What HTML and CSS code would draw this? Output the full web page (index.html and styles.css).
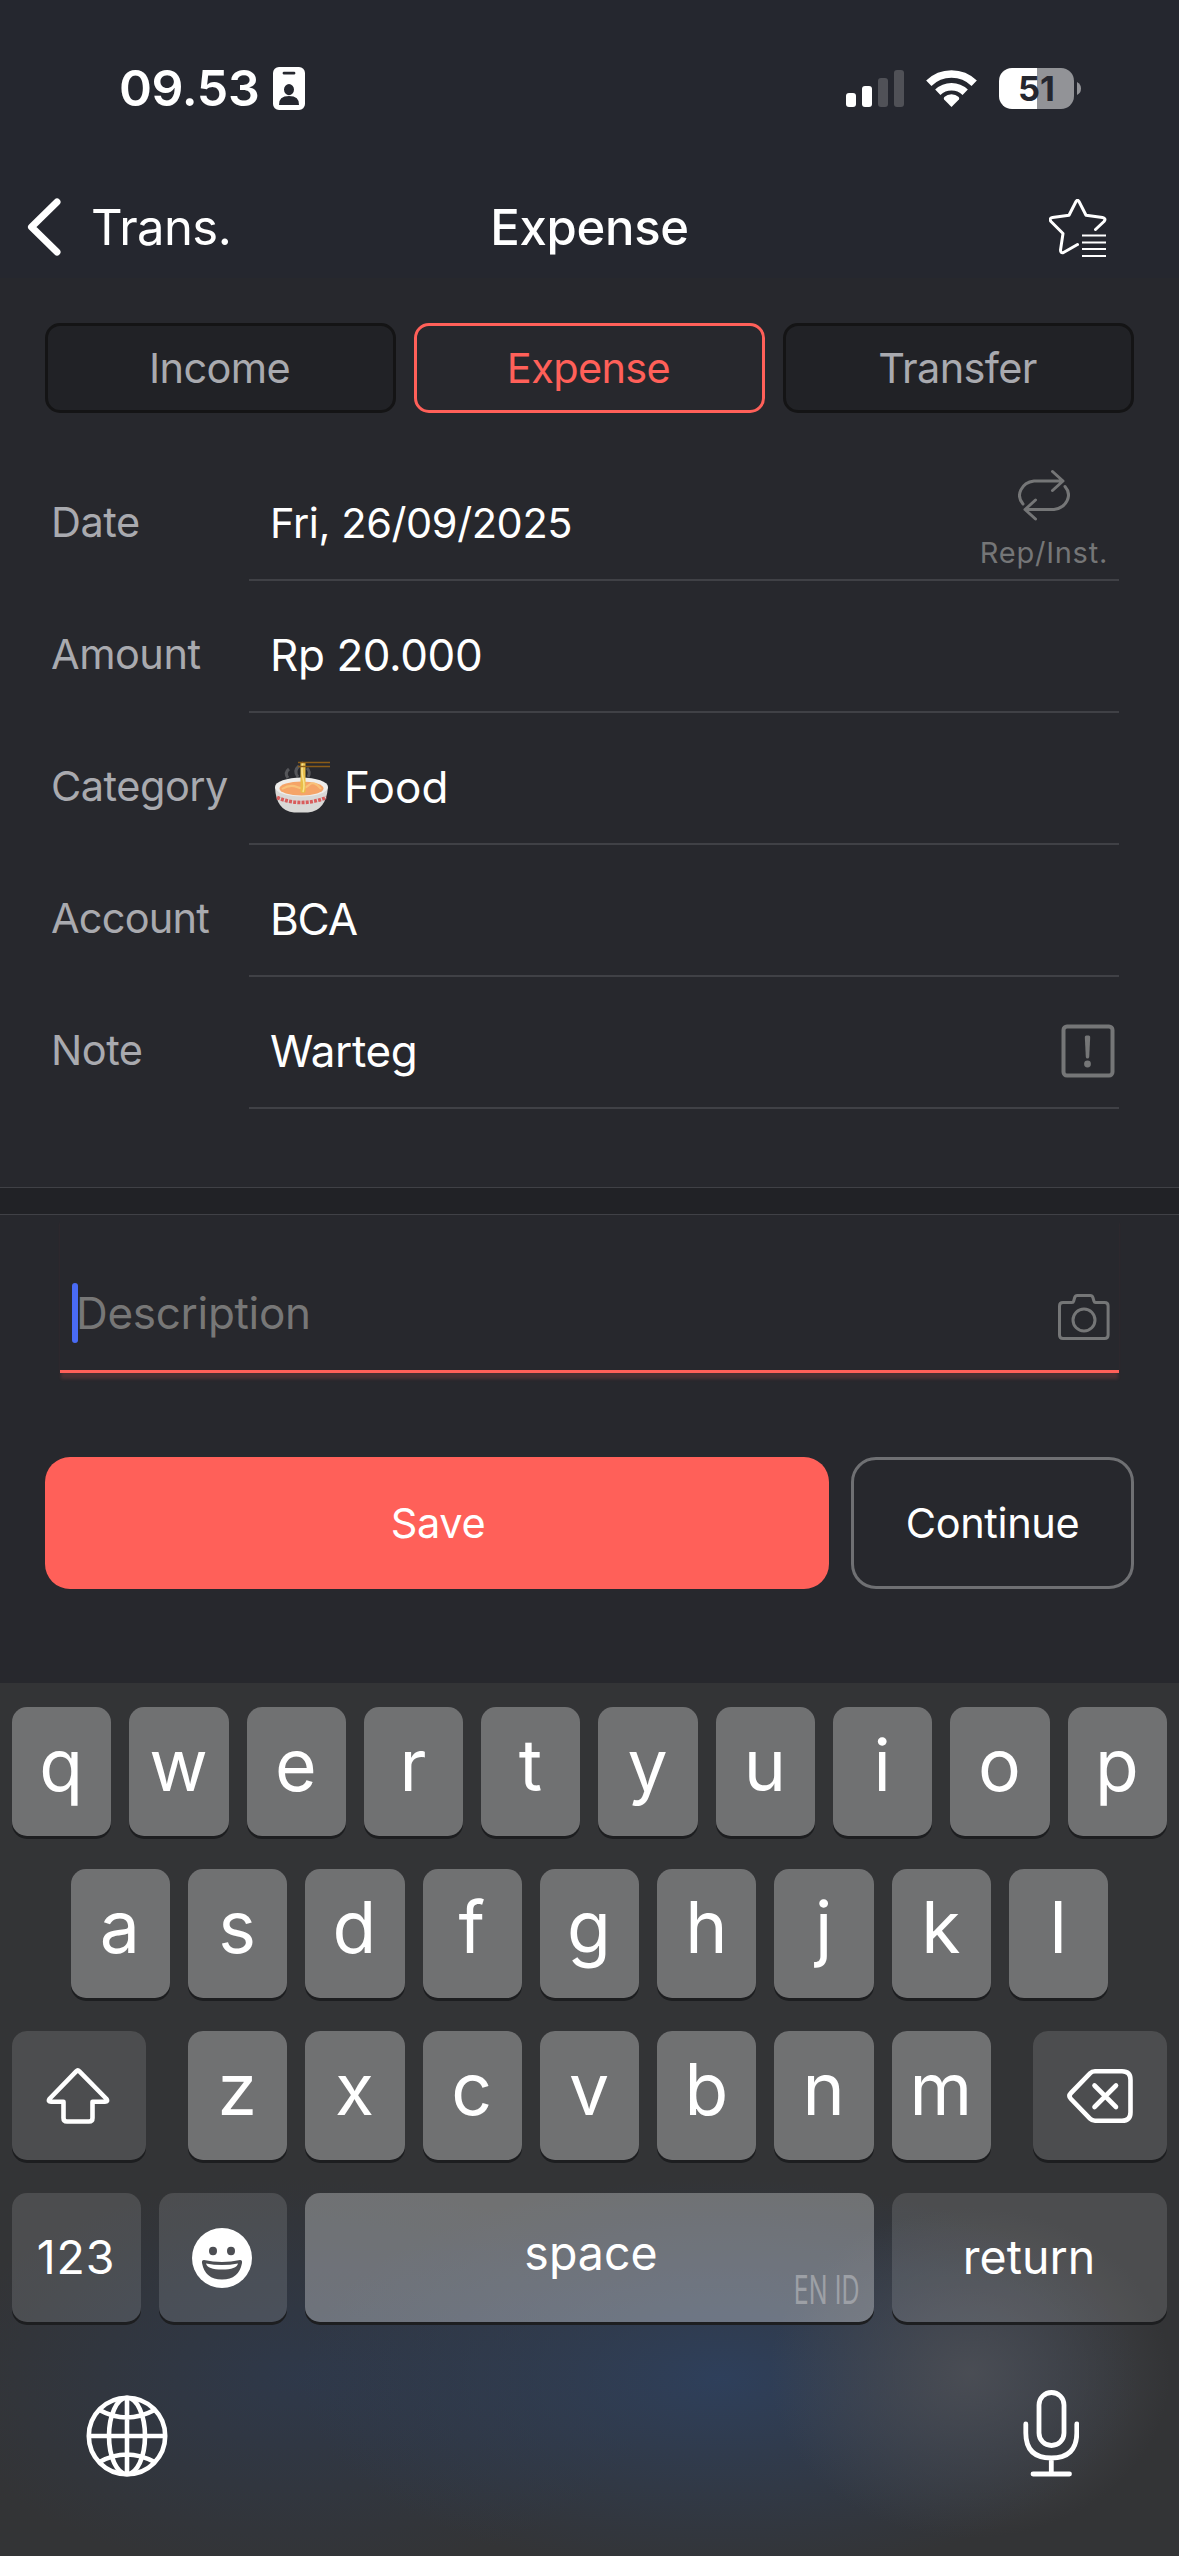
FILE: index.html
```html
<!DOCTYPE html>
<html lang="en">
<head>
<meta charset="utf-8">
<title>Expense</title>
<link rel="stylesheet" href="styles.css">
</head>
<body>
<div class="screen">
  <header class="top">
    <div class="status">
      <span class="time">09.53</span>
      <svg class="badge" width="32" height="43" viewBox="0 0 32 43"><path fill="#fff" fill-rule="evenodd" d="M6 0h20a6 6 0 0 1 6 6v31a6 6 0 0 1-6 6H6a6 6 0 0 1-6-6V6a6 6 0 0 1 6-6zM11 4.8a1.4 1.4 0 0 0 0 2.8h10a1.4 1.4 0 0 0 0-2.8zM16 17a5 5.6 0 1 0 0 11.2A5 5.6 0 1 0 16 17zM6 38h20q.5-9-10-9T6 38z"/></svg>
      <div class="indicators">
        <svg width="58" height="37" viewBox="0 0 58 37"><g fill="#fff"><rect y="23" width="10" height="14" rx="3"/><rect x="16" y="16" width="10" height="21" rx="3"/><g fill="#505157"><rect x="32" y="8" width="10" height="29" rx="3"/><rect x="48" width="10" height="37" rx="3"/></g></g></svg>
        <svg class="wifi" width="51" height="37" viewBox="0 0 51 37"><g fill="none" stroke="#fff" stroke-width="7.6"><path d="M2.8 13.2a32.5 32.5 0 0 1 45.4 0"/><path d="M11.8 22.3a19.8 19.8 0 0 1 27.4 0"/></g><path fill="#fff" d="M25.5 37l-7.4-7.6a2 2 0 0 1 .2-2.4 10.6 10.6 0 0 1 14.4 0 2 2 0 0 1 .2 2.4z"/></svg>
        <div class="battery"><span>51</span></div>
        <svg width="4" height="13" viewBox="0 0 4 13"><path fill="#929397" d="M0 0q4 2 4 6.500T0 13z"/></svg>
      </div>
    </div>
    <nav class="nav">
      <div class="back">
        <svg width="34" height="58" viewBox="0 0 34 58"><path d="M30 4L4.500 29 30 54" fill="none" stroke="#fff" stroke-width="7" stroke-linecap="round" stroke-linejoin="round"/></svg>
        <span>Trans.</span>
      </div>
      <h1 class="title">Expense</h1>
      <svg class="star" width="58" height="59" viewBox="0 0 58 59"><g fill="none" stroke="#fff" stroke-width="3" stroke-linecap="round" stroke-linejoin="round"><path d="M46.500 30.500L55 22.500q2.500-3-1.500-4L37 16.200 30 2.500q-1.500-2.500-3 0L20 16.200 3.500 18.500q-4 1-1.500 4L14 34.500 11.500 51q0 3.500 3 2.500L28.500 45.500"/></g><path stroke="#fff" stroke-width="2" d="M33 36.500h24M33 43.500h24M33 50h24M33 57h24"/></svg>
    </nav>
  </header>

  <div class="tabs">
    <div class="tab">Income</div>
    <div class="tab tab-active"><span>Expense</span></div>
    <div class="tab">Transfer</div>
  </div>

  <section class="form">
    <div class="row"><div class="label">Date</div>
      <div class="field"><span class="value date">Fri, 26/09/2025</span>
        <div class="repeat">
          <svg width="52" height="52" viewBox="0 0 52 52"><path d="M5 35A17 14.500 0 0 1 16 12h28M34.500 2.500L45 12 34.500 21.500M47 17.500A17 14.500 0 0 1 36 40.500H8M17.500 31L7 40.500 17.500 50" fill="none" stroke="#757677" stroke-width="3" stroke-linecap="round" stroke-linejoin="round"/></svg>
          <span>Rep/Inst.</span>
        </div>
      </div></div>
    <div class="row"><div class="label">Amount</div><div class="field"><span class="value amount">Rp 20.000</span></div></div>
    <div class="row"><div class="label">Category</div>
      <div class="field">
        <svg class="bowl" width="56" height="54" viewBox="0 0 56 54">
          <path d="M14 18q-4-5 1-9M24 17q-5-6 1-11M34 17q3-5-1-9" fill="none" stroke="#55565a" stroke-width="3"/>
          <path d="M1 27Q2 51 20 52.500h14Q52 51 54 27z" fill="#d9d8d6"/>
          <ellipse cx="27.500" cy="27" rx="26.500" ry="9.500" fill="#eeedeb"/>
          <ellipse cx="27.500" cy="28.500" rx="22" ry="7" fill="#f5a468"/>
          <path d="M8 29q8-5 15-2t12-2 12 4" fill="none" stroke="#f8c27a" stroke-width="2"/>
          <path d="M3 37.500q24 10 49.500 0" fill="none" stroke="#d95c5c" stroke-width="3.600" stroke-dasharray="3 1.200"/>
          <path d="M26.500 2h5v30q-2.500 2-5 0z" fill="#e9bf49"/><path d="M29 2q-2 8 0 16t0 14" fill="none" stroke="#f9e391" stroke-width="1.500"/>
          <path d="M24 2.500h32M24 6.500h32" stroke="#8a5b17" stroke-width="1.600"/>
        </svg>
        <span class="value food">Food</span></div></div>
    <div class="row"><div class="label account">Account</div><div class="field"><span class="value bca">BCA</span></div></div>
    <div class="row"><div class="label">Note</div><div class="field"><span class="value warteg">Warteg</span>
      <svg class="alert" width="54" height="54" viewBox="0 0 54 54"><rect x="2.500" y="2.500" width="49" height="49" rx="3.500" fill="none" stroke="#757677" stroke-width="4"/><path fill="#757677" d="M23.800 13q0-1.500 1.500-1.500h2.400q1.500 0 1.500 1.500l-1 20q-.2 1.600-1.700 1.600T24.800 33z"/><circle cx="26.500" cy="40" r="3.400" fill="#757677"/></svg></div></div>
  </section>

  <div class="band"></div>

  <div class="description">
    <i class="caret"></i><span>Description</span>
    <svg class="camera" width="52" height="46" viewBox="0 0 52 46"><g fill="none" stroke="#757677" stroke-width="3" stroke-linejoin="round"><path d="M5 8.500h9q1.300 0 1.700-1.500l1-3.500q.6-2 2.600-2h13q2 0 2.600 2l1 3.500q.4 1.500 1.700 1.500h9q3.500 0 3.500 3.500v29q0 3.500-3.500 3.500H5q-3.500 0-3.500-3.500V12Q1.500 8.500 5 8.500z"/><circle cx="26" cy="26" r="11"/></g></svg>
  </div>

  <div class="actions"><div class="save">Save</div><div class="continue">Continue</div></div>

  <div class="keyboard">
    <div class="keys"><b>q</b><b>w</b><b>e</b><b>r</b><b>t</b><b>y</b><b>u</b><b>i</b><b>o</b><b>p</b></div>
    <div class="keys keys-inset"><b>a</b><b>s</b><b>d</b><b>f</b><b>g</b><b>h</b><b>j</b><b>k</b><b>l</b></div>
    <div class="keys">
      <b class="dark side shift"><svg width="64" height="56" viewBox="0 0 64 56"><path d="M30.200 3.300q1.600-1.600 3.200 0L60.600 31q1.500 2.700-1.600 2.700H46.500V50q0 3.500-3.500 3.500H21q-3.500 0-3.500-3.500V33.700H5q-3.100 0-1.600-2.700z" fill="none" stroke="#fff" stroke-width="4.600" stroke-linejoin="round"/></svg></b>
      <b>z</b><b>x</b><b>c</b><b>v</b><b>b</b><b>n</b><b>m</b>
      <b class="dark side delete"><svg width="66" height="54" viewBox="0 0 66 54"><g fill="none" stroke="#fff" stroke-width="4.600" stroke-linejoin="round" stroke-linecap="round"><path d="M28 2.300h27q8.500 0 8.500 8.500v32.400q0 8.500-8.500 8.500H28q-3 0-5-2L4 30q-3-3 0-6L23 4.300q2-2 5-2z"/><path d="M27.500 16.500l21.500 21.500M49 16.500L27.500 38"/></g></svg></b>
    </div>
    <div class="keys">
      <b class="dark num word">123</b>
      <b class="dark emoji"><svg width="60" height="60" viewBox="0 0 60 60"><circle cx="30" cy="30" r="30" fill="#fff"/><g fill="#4c4e53"><ellipse cx="21" cy="23" rx="4" ry="4.200"/><ellipse cx="39" cy="23" rx="4" ry="4.200"/><path d="M12 32q18 4 36 0 2.500 0 2 3-3 16.500-20 16.500T10 35q-.5-3 2-3z"/></g><path fill="#fff" d="M14 35.500q16 3 32 0-1.500 6-16 6t-16-6z"/></svg></b>
      <b class="space word"><span>space</span><small>EN ID</small></b>
      <b class="dark return word">return</b>
    </div>
    <div class="tools">
      <svg width="82" height="82" viewBox="0 0 82 82"><g fill="none" stroke="#fff" stroke-width="4.600"><circle cx="41" cy="41" r="38.200"/><ellipse cx="41" cy="41" rx="18" ry="38.200"/><path d="M41 3v76M3 41h76M13.500 15q27 15 55 0M13.500 67q27-15 55 0"/></g></svg>
      <svg class="mic" width="56" height="87" viewBox="0 0 56 87"><g fill="none" stroke="#fff" stroke-width="4.800" stroke-linecap="round"><rect x="16" y="2.500" width="25" height="53" rx="12.500"/><path d="M2.800 34v9q0 25 25.500 25t25.500-25v-9M28.300 68v16M10 84h36.500"/></g></svg>
    </div>
  </div>
</div>
</body>
</html>
```
FILE: styles.css
```css
* { box-sizing: border-box; }
body { margin: 0; background: #27282d; }
svg { display: block; flex: none; }
.screen { width: 1179px; height: 2556px; overflow: hidden; display: flex; flex-direction: column; background: #27282d; color: #fff; font-family: Inter, "Liberation Sans", sans-serif; font-size: 41.5px; }
.top { height: 278px; flex: none; background: #25272f; }
.status { height: 176px; display: flex; align-items: center; padding: 0 98px 0 119px; }
.time { font-size: 50px; font-weight: 570; width: 154px; letter-spacing: -.4px; }
.indicators { display: flex; align-items: center; margin-left: auto; }
.wifi { margin: 0 22px; }
.battery { width: 75px; height: 41px; margin-right: 3px; border-radius: 13px; background: linear-gradient(90deg, #fff 38px, #929397 38px); color: #25272f; font-size: 34.5px; font-weight: 650; line-height: 41px; text-align: center; }
.nav { height: 102px; display: grid; grid-template-columns: 1fr 220px 1fr; align-items: center; padding: 0 27px; font-size: 49px; }
.back { display: flex; align-items: center; gap: 30px; letter-spacing: -.6px; }
.title { margin: 0; font-size: 49px; font-weight: 550; text-align: center; letter-spacing: -.3px; }
.star { justify-self: end; margin: 3px 45px 0 0; }
.tabs { display: grid; grid-template-columns: repeat(3, 1fr); gap: 18px; padding: 45px 45px 0; letter-spacing: -.65px; }
.tab { height: 90px; padding-right: 2px; border: 3px solid #141415; border-radius: 15px; background: #212226; color: #a9aaaf; line-height: 84px; text-align: center; }
.tab-active { border-color: #ff6059; background: none; color: #ff6059; }
.form { padding: 36px 60px 0 51px; }
.row { height: 132px; display: grid; grid-template: 132px / 198px 1fr; }
.label { color: #a9aaaf; line-height: 146px; letter-spacing: -.5px; }
.account { letter-spacing: -.8px; }
.field { border-bottom: 2px solid #404146; padding-left: 21px; display: flex; align-items: center; padding-top: 17px; }
.value { font-size: 44px; letter-spacing: -.4px; }
.date { font-size: 41.5px; }
.food { letter-spacing: .2px; }
.bca { letter-spacing: -1.2px; }
.repeat { align-self: flex-start; margin: 3px 11px 0 auto; display: flex; flex-direction: column; align-items: center; gap: 17px; color: #757677; font-size: 29px; line-height: 30px; letter-spacing: .75px; }
.bowl { margin: 0 14px 0 4px; }
.alert { margin-left: auto; margin-right: 4px; }
.band { height: 28px; flex: none; margin-top: 78px; background: #212226; border: solid #404146; border-width: 1px 0; }
.description { height: 158px; flex: none; margin: 0 60px; padding: 41px 9px 0 12px; border-bottom: 3px solid #ff6059; box-shadow: 0 7px 3px -1px rgba(255, 96, 89, .16); display: flex; align-items: center; font-size: 44px; color: #777; letter-spacing: -.3px; }
.description span { margin-left: -2px; }
.caret { width: 6px; height: 60px; border-radius: 3px; background: #496bf5; }
.camera { margin: 7px 0 0 auto; }
.actions { display: flex; gap: 22px; padding: 84px 45px 0; text-align: center; line-height: 132px; letter-spacing: -.4px; }
.save { flex: 1; height: 132px; padding-left: 2px; border-radius: 25px; background: #ff6059; }
.continue { width: 283px; height: 132px; border: 3px solid #6f7073; border-radius: 25px; line-height: 126px; }
.keyboard { height: 873px; flex: none; margin-top: 94px; padding: 24px 12px 0; display: flex; flex-direction: column; gap: 33px; background: radial-gradient(ellipse 200px 165px at 970px 690px, rgba(75, 78, 85, .95), rgba(75, 78, 85, 0)), radial-gradient(ellipse 420px 200px at 720px 695px, rgba(46, 64, 93, .95), rgba(46, 64, 93, 0)), radial-gradient(ellipse 360px 200px at 300px 695px, rgba(46, 57, 76, .9), rgba(46, 57, 76, 0)), #333436; }
.keys { display: flex; gap: 18px; height: 129px; }
.keys-inset { padding: 0 58.7px; }
.keys b { flex: 1; height: 129px; padding-right: 1px; border-radius: 15px; background: rgba(255, 255, 255, .3); box-shadow: 0 3px 0 #1d1e20; font-size: 71.5px; font-weight: 380; line-height: 117px; text-align: center; display: flex; justify-content: center; }
.keys .dark { background: rgba(255, 255, 255, .125); align-items: center; }
.keys .side { flex: 0 0 134px; }
.keys .shift { margin-right: 24px; padding-right: 2px; }
.keys .delete { margin-left: 24px; padding-right: 0; }
.keys .num { flex: 0 0 129px; letter-spacing: .8px; }
.keys .emoji { flex: 0 0 128px; padding-right: 2px; }
.keys .return { flex: 0 0 275px; }
.keys .word { font-size: 46.5px; font-weight: 400; line-height: 129px; }
.keys .space { position: relative; padding: 0 0 0 3px; line-height: 121px; }
.space small { position: absolute; right: 15px; bottom: 9px; font-size: 39px; line-height: 46px; font-weight: 400; color: #9da0a6; transform: scaleX(.64); transform-origin: right; }
.tools { display: flex; justify-content: space-between; align-items: flex-start; padding: 40px 88px 0 74px; }
.mic { margin-top: -5px; }
```
